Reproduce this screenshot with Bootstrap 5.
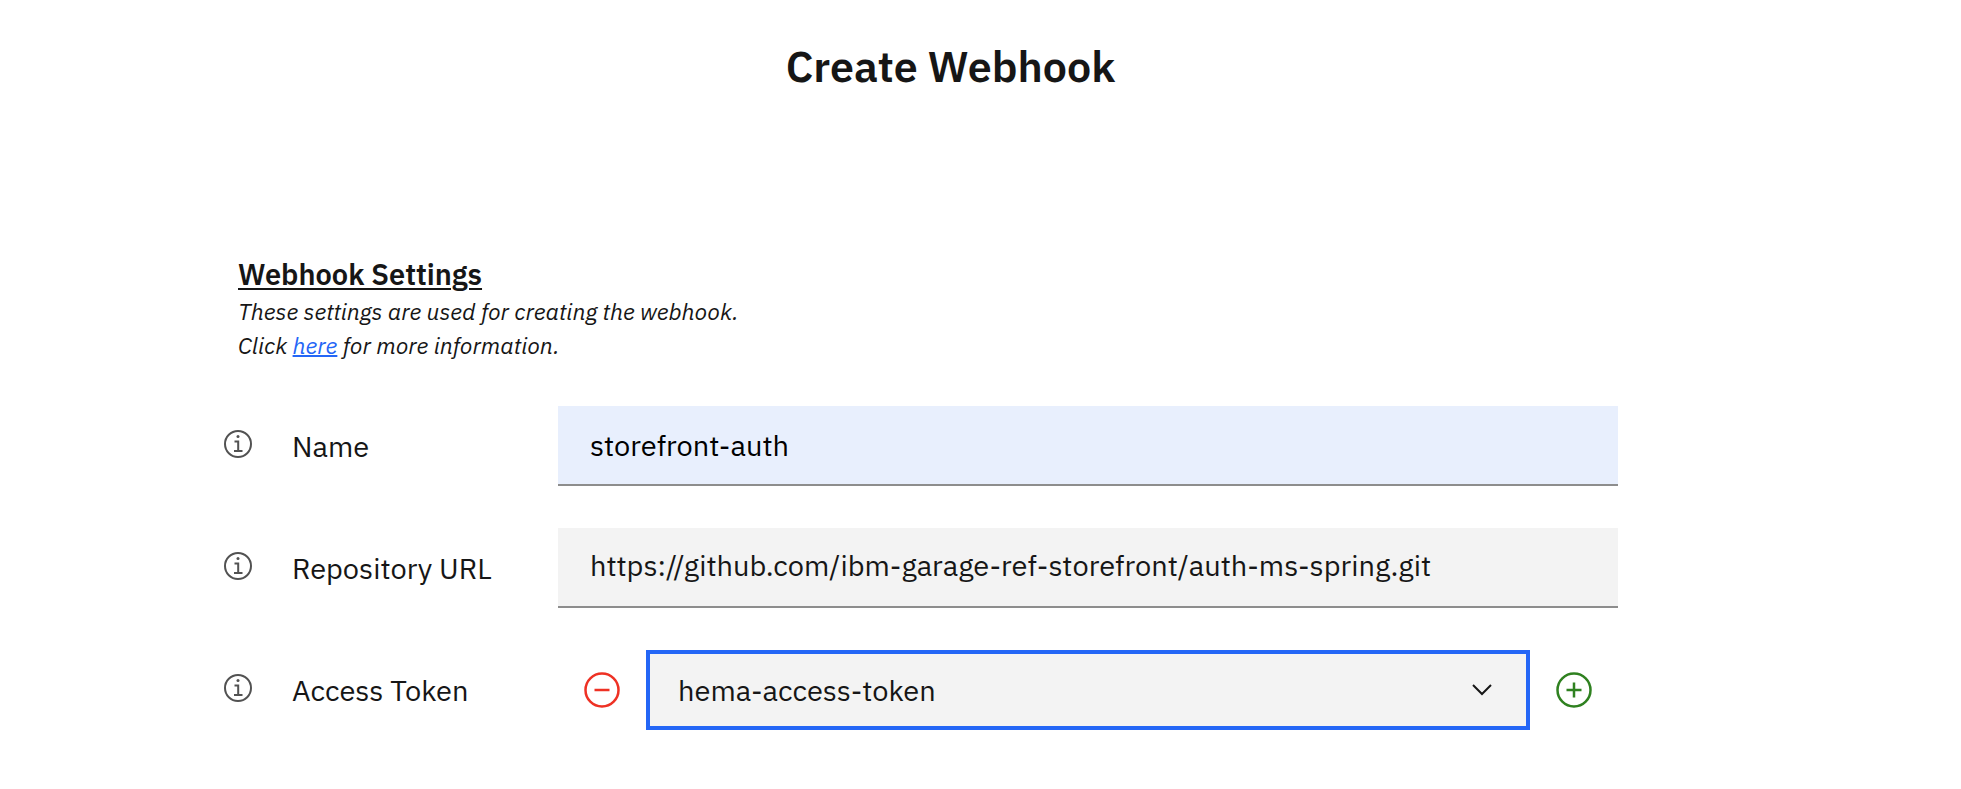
<!DOCTYPE html>
<html lang="en">
<head>
<meta charset="utf-8">
<meta name="viewport" content="width=device-width, initial-scale=1">
<title>Create Webhook</title>
<link href="https://cdn.jsdelivr.net/npm/bootstrap@5.3.0/dist/css/bootstrap.min.css" rel="stylesheet">
<style>
  body { font-family: "IBM Plex Sans", "Noto Sans", sans-serif; font-size: 29px; line-height: 36px; color: #161616; background: #fff; }
  main { padding: 38px 60px 56px 0; }
  .page-title { font-size: 43px; line-height: 56px; font-weight: 600; margin-bottom: 160px; }
  .webhook-form { padding: 0 283px 0 224px; }
  .section-intro { padding-left: 14px; margin-bottom: 44px; }
  .section-title { font-size: 29px; line-height: 40px; font-weight: 600; margin: 0; text-decoration: underline; text-decoration-thickness: 2px; text-underline-offset: 3px; }
  .section-text { font-size: 23px; line-height: 34px; font-style: italic; margin: 0; }
  .section-text a { color: #2466f6; text-decoration-thickness: 2px; }
  .field-list { display: grid; gap: 42px; }
  .field-caption { width: 334px; gap: 40px; }
  .field-caption svg { width: 28px; height: 28px; color: #525252; margin-bottom: 4px; }
  .field-box.form-control, .field-box.form-select { height: 80px; border: 0; border-radius: 0; font-size: 29px; line-height: 36px; color: #161616; background-color: #f3f3f3; }
  .field-box.form-control { border-bottom: 2px solid #8d8d8d; padding: 0 32px 4px; }
  .field-box.prefilled { background-color: #e8effd; color: #000; padding-bottom: 0; }
  .field-box.form-select { border: 4px solid #2466f6; padding: 0 72px 0 28px; background-size: 20px 12px; background-position: right 34px center;
    background-image: url("data:image/svg+xml,%3Csvg xmlns='http://www.w3.org/2000/svg' viewBox='0 0 20 12'%3E%3Cpath fill='none' stroke='%23161616' stroke-width='2' d='M1 1l9 9 9-9'/%3E%3C/svg%3E"); }
  .token-controls { gap: 26px; padding: 0 26px; }
  .round-btn { line-height: 0; }
  .round-btn svg { width: 36px; height: 36px; }
  .remove-token { color: #ee3124; }
  .add-token { color: #2f8120; }
</style>
</head>
<body>
<svg class="d-none" aria-hidden="true">
  <symbol id="info" viewBox="0 0 28 28">
    <circle cx="14" cy="14" r="13" fill="none" stroke="currentColor" stroke-width="2"/>
    <circle cx="14" cy="6.6" r="1.5" fill="currentColor"/>
    <path d="M10.5 11.5H14.2V21M10 21H18.5" fill="none" stroke="currentColor" stroke-width="2"/>
  </symbol>
</svg>
<main>
  <h1 class="page-title text-center">Create Webhook</h1>
  <form class="webhook-form">
    <div class="section-intro">
      <h2 class="section-title">Webhook Settings</h2>
      <p class="section-text">These settings are used for creating the webhook.<br>Click <a href="#">here</a> for more information.</p>
    </div>
    <div class="field-list">
      <div class="d-flex align-items-center">
        <div class="field-caption d-flex align-items-center flex-shrink-0">
          <svg aria-hidden="true"><use href="#info"/></svg>
          <label for="name">Name</label>
        </div>
        <input class="form-control field-box prefilled" id="name" type="text" value="storefront-auth">
      </div>
      <div class="d-flex align-items-center">
        <div class="field-caption d-flex align-items-center flex-shrink-0">
          <svg aria-hidden="true"><use href="#info"/></svg>
          <label for="repo">Repository URL</label>
        </div>
        <input class="form-control field-box" id="repo" type="text" value="https://github.com/ibm-garage-ref-storefront/auth-ms-spring.git">
      </div>
      <div class="d-flex align-items-center">
        <div class="field-caption d-flex align-items-center flex-shrink-0">
          <svg aria-hidden="true"><use href="#info"/></svg>
          <label for="token">Access Token</label>
        </div>
        <div class="token-controls d-flex align-items-center flex-grow-1">
          <button class="round-btn remove-token btn p-0 border-0" type="button" aria-label="Remove token">
            <svg viewBox="0 0 36 36" fill="none" stroke="currentColor" stroke-width="2.5"><circle cx="18" cy="18" r="16.5"/><path d="M10.5 18h15"/></svg>
          </button>
          <select class="form-select field-box" id="token"><option>hema-access-token</option></select>
          <button class="round-btn add-token btn p-0 border-0" type="button" aria-label="Add token">
            <svg viewBox="0 0 36 36" fill="none" stroke="currentColor" stroke-width="2.5"><circle cx="18" cy="18" r="16.5"/><path d="M10.5 18h15M18 10.5v15"/></svg>
          </button>
        </div>
      </div>
    </div>
  </form>
</main>
<script src="https://cdn.jsdelivr.net/npm/bootstrap@5.3.0/dist/js/bootstrap.bundle.min.js"></script>
</body>
</html>
